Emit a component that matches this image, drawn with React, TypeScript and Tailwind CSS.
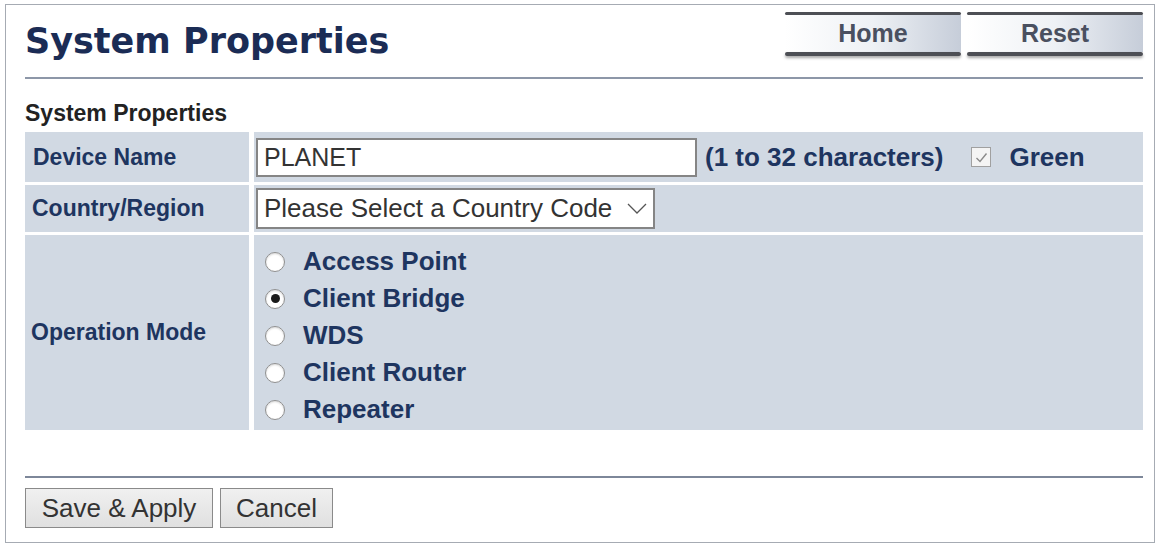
import React from 'react';

const modes = ['Access Point', 'Client Bridge', 'WDS', 'Client Router', 'Repeater'];

function TopButton({ label }: { label: string }) {
  return (
    <div className="flex h-[44px] w-[176px] flex-col">
      <div className="h-[4px] rounded-full bg-[#4d4f55]" />
      <div className="flex flex-1 items-center justify-center bg-gradient-to-r from-white via-[#eef1f5] to-[#c6cdd9] text-[25px] font-bold text-[#4a5060]">
        {label}
      </div>
      <div className="h-[5px] rounded-full bg-[#4d4f55] shadow-[0_2px_3px_rgba(0,0,0,0.35)]" />
    </div>
  );
}

function Radio({ checked }: { checked?: boolean }) {
  return (
    <span className="flex h-[20px] w-[20px] items-center justify-center rounded-full border border-[#8f8f8f] bg-white shadow-[inset_0_1px_2px_rgba(0,0,0,0.15)]">
      {checked && <span className="h-[9px] w-[9px] rounded-full bg-[#1a1a1a]" />}
    </span>
  );
}

export default function App() {
  return (
    <div className="min-h-[545px] bg-white font-['Liberation_Sans',Arial,sans-serif]">
      <div className="ml-[5px] mt-[4px] h-[539px] w-[1150px] border border-[#a6abb3] bg-white pl-[19px] pr-[11px]">
        {/* header */}
        <div className="flex h-[74px] items-start justify-between border-b-2 border-[#8d97a8]">
          <h1 className="pt-[15px] font-['DejaVu_Sans',Verdana,sans-serif] text-[35px] font-bold leading-[42px] text-[#1b2c55]">
            System Properties
          </h1>
          <div className="flex gap-[6px] pt-[7px]">
            <TopButton label="Home" />
            <TopButton label="Reset" />
          </div>
        </div>

        <div className="pt-[22px] text-[23px] font-bold leading-[24px] text-[#222]">System Properties</div>

        <div className="mt-[7px] flex flex-col gap-[3px] text-[#1e3560]">
          {/* device name */}
          <div className="flex h-[50px] gap-[5px]">
            <div className="flex w-[224px] items-center bg-[#d1d9e3] pl-[8px] text-[23px] font-bold">Device Name</div>
            <div className="flex flex-1 items-center bg-[#d1d9e3] pl-[2px]">
              <input
                defaultValue="PLANET"
                className="h-[39px] w-[441px] border-2 border-[#858585] bg-white px-[6px] text-[25px] text-[#333] outline-none"
              />
              <span className="ml-[8px] text-[26px] font-bold">(1 to 32 characters)</span>
              <span className="ml-[28px] flex h-[20px] w-[20px] items-center justify-center border border-[#a0a0a0] bg-[#f4f4f4]">
                <svg width="15" height="15" viewBox="0 0 15 15" fill="none">
                  <polyline points="2.5,8 6,11.5 12.5,3.5" stroke="#8a8a8a" strokeWidth="1.4" />
                </svg>
              </span>
              <span className="ml-[18px] text-[26px] font-bold">Green</span>
            </div>
          </div>

          {/* country */}
          <div className="flex h-[47px] gap-[5px]">
            <div className="flex w-[224px] items-center bg-[#d1d9e3] pl-[7px] text-[23px] font-bold">Country/Region</div>
            <div className="flex flex-1 items-center bg-[#d1d9e3] pl-[2px]">
              <div className="flex h-[41px] w-[399px] items-center justify-between border-2 border-[#858585] bg-white pl-[6px] pr-[6px] text-[26px] text-[#333]">
                <span>Please Select a Country Code</span>
                <svg width="20" height="11" viewBox="0 0 20 11" fill="none">
                  <polyline points="1,1 10,10 19,1" stroke="#555" strokeWidth="1.3" />
                </svg>
              </div>
            </div>
          </div>

          {/* operation mode */}
          <div className="flex h-[195px] gap-[5px]">
            <div className="flex w-[224px] items-center bg-[#d1d9e3] pl-[6px] text-[23px] font-bold">Operation Mode</div>
            <div className="flex flex-1 flex-col bg-[#d1d9e3] pl-[11px] pt-[8px]">
              {modes.map((m) => (
                <div key={m} className="flex h-[37px] items-center gap-[18px] text-[26px] font-bold">
                  <Radio checked={m === 'Client Bridge'} />
                  <span>{m}</span>
                </div>
              ))}
            </div>
          </div>
        </div>

        <div className="mt-[46px] h-[2px] bg-[#7d8799]" />

        <div className="mt-[10px] flex gap-[7px]">
          <button className="h-[40px] w-[188px] border border-[#8a8a8a] bg-gradient-to-b from-[#f0f0f0] to-[#e0e0e0] text-[26px] text-[#333]">
            Save &amp; Apply
          </button>
          <button className="h-[40px] w-[113px] border border-[#8a8a8a] bg-gradient-to-b from-[#f0f0f0] to-[#e0e0e0] text-[26px] text-[#333]">
            Cancel
          </button>
        </div>
      </div>
    </div>
  );
}
